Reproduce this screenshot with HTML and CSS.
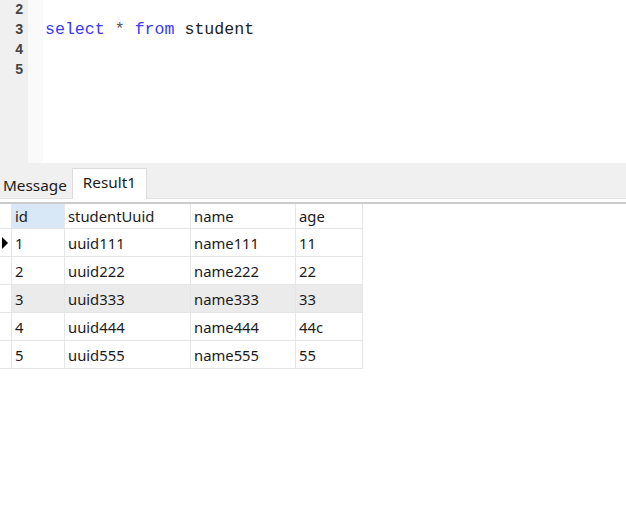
FILE: index.html
```html
<!DOCTYPE html>
<html>
<head>
<meta charset="utf-8">
<link rel="stylesheet" href="styles.css">
</head>
<body>
<div class="editor">
  <div class="gutter">
    <div class="ln">2</div>
    <div class="ln">3</div>
    <div class="ln">4</div>
    <div class="ln">5</div>
  </div>
  <div class="fold"></div>
  <div class="code">
    <div class="line"></div>
    <div class="line"><span class="kw">select</span> <span class="op">*</span> <span class="kw">from</span> student</div>
    <div class="line"></div>
    <div class="line"></div>
  </div>
</div>
<div class="tabbar">
  <div class="tab">Message</div>
  <div class="tab active">Result1</div>
</div>
<div class="gap"></div>
<div class="grid">
  <div class="row head">
    <div class="ind"></div>
    <div class="cell c1 sel">id</div>
    <div class="cell c2">studentUuid</div>
    <div class="cell c3">name</div>
    <div class="cell c4">age</div>
  </div>
  <div class="row">
    <div class="ind"><span class="arrow"></span></div>
    <div class="cell c1">1</div>
    <div class="cell c2">uuid111</div>
    <div class="cell c3">name111</div>
    <div class="cell c4">11</div>
  </div>
  <div class="row">
    <div class="ind"></div>
    <div class="cell c1">2</div>
    <div class="cell c2">uuid222</div>
    <div class="cell c3">name222</div>
    <div class="cell c4">22</div>
  </div>
  <div class="row hl">
    <div class="ind"></div>
    <div class="cell c1">3</div>
    <div class="cell c2">uuid333</div>
    <div class="cell c3">name333</div>
    <div class="cell c4">33</div>
  </div>
  <div class="row">
    <div class="ind"></div>
    <div class="cell c1">4</div>
    <div class="cell c2">uuid444</div>
    <div class="cell c3">name444</div>
    <div class="cell c4">44c</div>
  </div>
  <div class="row">
    <div class="ind"></div>
    <div class="cell c1">5</div>
    <div class="cell c2">uuid555</div>
    <div class="cell c3">name555</div>
    <div class="cell c4">55</div>
  </div>
</div>
</body>
</html>
```
FILE: styles.css
```css
html, body {
  margin: 0;
  padding: 0;
  background: #ffffff;
}
body {
  width: 626px;
  height: 507px;
  overflow: hidden;
  font-family: "Noto Sans", "Open Sans", sans-serif;
  color: #1b1b1b;
}
.editor {
  display: flex;
  height: 163px;
}
.gutter {
  width: 28px;
  background: #f0f0f0;
}
.ln {
  height: 20px;
  line-height: 20px;
  padding-left: 15px;
  font-family: "Liberation Mono", monospace;
  font-size: 14px;
  font-weight: bold;
  color: #444444;
}
.fold {
  width: 15px;
  background-color: #fafafa;
  background-image: radial-gradient(#eeeeee 0.6px, transparent 0.7px);
  background-size: 2px 2px;
}
.code {
  flex: 1;
  padding-left: 2px;
}
.line {
  height: 20px;
  line-height: 20px;
  font-family: "Liberation Mono", monospace;
  font-size: 16.6px;
  color: #222222;
  white-space: pre;
}
.kw { color: #3a3af2; }
.op { color: #555555; }
.tabbar {
  display: flex;
  align-items: flex-end;
  height: 35px;
  background: #f0f0f0;
  border-bottom: 1px solid #e2e2e2;
}
.tab {
  font-size: 15.3px;
  line-height: 20px;
  padding: 0 5px 3px 3px;
  color: #1b1b1b;
}
.tab.active {
  align-self: stretch;
  margin-top: 5px;
  margin-bottom: -1px;
  padding: 3px 10px 0 10px;
  background: #ffffff;
  border: 1px solid #dcdcdc;
  border-bottom: none;
}
.gap {
  height: 3px;
  border-bottom: 2px solid #cbcbcb;
}
.grid {
  display: flex;
  flex-direction: column;
}
.row {
  display: flex;
  height: 28px;
}
.row.head {
  height: 25px;
}
.ind {
  width: 12px;
  border-right: 1px solid #e6e6e6;
  border-bottom: 1px solid #e6e6e6;
  box-sizing: border-box;
  display: flex;
  align-items: center;
}
.arrow {
  width: 0;
  height: 0;
  border-top: 6px solid transparent;
  border-bottom: 6px solid transparent;
  border-left: 6px solid #000000;
  margin-left: 2px;
}
.cell {
  box-sizing: border-box;
  border-right: 1px solid #e6e6e6;
  border-bottom: 1px solid #e6e6e6;
  font-size: 14.8px;
  padding-left: 3px;
  display: flex;
  align-items: center;
  white-space: nowrap;
}
.c1 { width: 53px; }
.c2 { width: 126px; }
.c3 { width: 105px; }
.c4 { width: 67px; }
.sel { background: #d8e8f6; }
.hl .cell { background: #ebebeb; }
```
